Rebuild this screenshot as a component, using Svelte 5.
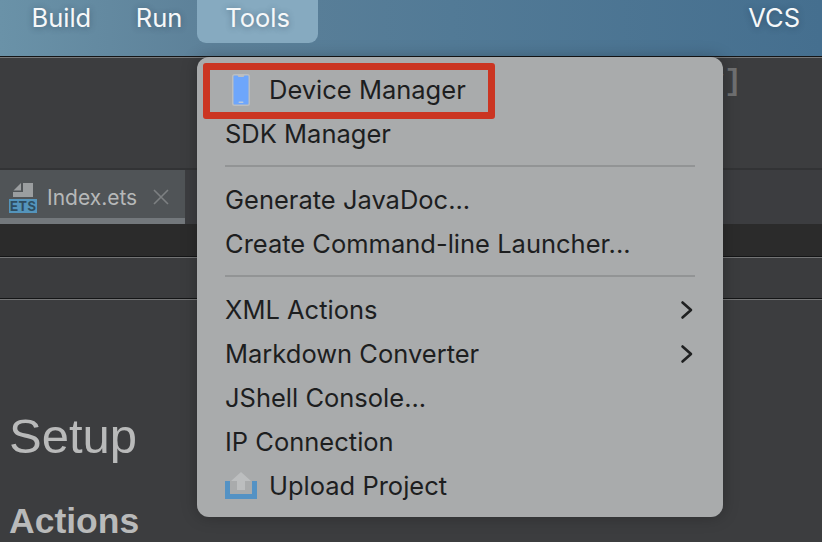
<script lang="ts">
	const menus = [
		{ label: 'Build', active: false },
		{ label: 'Run', active: false },
		{ label: 'Tools', active: true }
	];

	const groups = [
		[
			{ label: 'Device Manager', icon: 'phone' },
			{ label: 'SDK Manager' }
		],
		[
			{ label: 'Generate JavaDoc...' },
			{ label: 'Create Command-line Launcher...' }
		],
		[
			{ label: 'XML Actions', submenu: true },
			{ label: 'Markdown Converter', submenu: true },
			{ label: 'JShell Console...' },
			{ label: 'IP Connection' },
			{ label: 'Upload Project', icon: 'upload' }
		]
	];
</script>

<div class="screen">
	<header class="menubar">
		<nav class="menus">
			{#each menus as menu}
				<span class="menu" class:active={menu.active}>{menu.label}</span>
			{/each}
		</nav>
		<span class="vcs">VCS</span>
	</header>

	<div class="ide">
		<div class="toolbar">
			<span class="run-config">y]</span>
		</div>
		<div class="tabbar">
			<div class="tab">
				<div class="tab-body">
					<svg class="ets-icon" width="30" height="32" viewBox="0 0 30 32">
						<path d="M14 0h10v14H4V9h10z" fill="#9b9ea0" />
						<path d="M12 0v7.500H4.500z" fill="#9b9ea0" />
						<rect x="0" y="16" width="28" height="14" fill="#5494bb" />
						<text x="14" y="28" text-anchor="middle" class="ets-label">ETS</text>
					</svg>
					<span class="tab-name">Index.ets</span>
					<svg class="tab-close" width="16" height="16" viewBox="0 0 16 16">
						<path d="M1 1l14 14M15 1L1 15" stroke="#7d8082" stroke-width="1.600" fill="none" />
					</svg>
				</div>
				<div class="tab-underline"></div>
			</div>
		</div>
		<div class="strip"></div>
		<div class="band"></div>
		<div class="content">
			<h1>Setup</h1>
			<h2>Actions</h2>
		</div>
	</div>

	<div class="dropdown">
		{#each groups as group, i}
			{#if i > 0}
				<div class="separator"></div>
			{/if}
			{#each group as item}
				<div class="item">
					{#if item.icon === 'phone'}
						<svg class="item-icon" width="32" height="34" viewBox="0 0 32 34">
							<rect x="7" y="1" width="18" height="32" rx="2.500" fill="#bcbebf" />
							<path d="M9.500 2.500h3l1 1.500h5l1-1.500h3a1 1 0 0 1 1 1v27a1 1 0 0 1-1 1H9.500a1 1 0 0 1-1-1v-27a1 1 0 0 1 1-1z" fill="#6ea6fb" />
							<rect x="13.500" y="28.500" width="5" height="1.500" rx="0.700" fill="#b9c9de" />
						</svg>
					{:else if item.icon === 'upload'}
						<svg class="item-icon" width="32" height="28" viewBox="0 0 32 28">
							<path d="M2.500 9v15.500h27V9" fill="none" stroke="#5492c4" stroke-width="5" />
							<path d="M16 0l10 9h-6v9h-8V9H6z" fill="#bcbebf" />
						</svg>
					{/if}
					<span class="item-label">{item.label}</span>
					{#if item.submenu}
						<svg class="chevron" width="14" height="20" viewBox="0 0 14 20">
							<path d="M2.500 2.500L11 10L2.500 17.500" fill="none" stroke="#1f2021" stroke-width="2.600" stroke-linecap="round" stroke-linejoin="round" />
						</svg>
					{/if}
				</div>
			{/each}
		{/each}
	</div>

	<div class="highlight"></div>
</div>

<style>
	:global(body) {
		margin: 0;
		background: #3c3d3f;
	}

	.screen {
		position: relative;
		display: flex;
		flex-direction: column;
		width: 822px;
		height: 542px;
		overflow: hidden;
		font-family: Inter, 'Noto Sans', sans-serif;
		background: #3c3d3f;
	}

	.menubar {
		display: flex;
		justify-content: space-between;
		flex: none;
		height: 56px;
		padding: 0 22px 0 3px;
		box-sizing: border-box;
		background: linear-gradient(90deg, #6a92a8 0%, #5d8199 25%, #527a96 55%, #456f8f 100%);
	}

	.menus {
		display: flex;
		height: 43px;
	}

	.menu {
		padding: 0 28.500px;
		color: #f6f8f9;
		font-size: 25.500px;
		line-height: 36px;
		text-shadow: 0 1px 6px rgba(30, 50, 70, 0.45);
	}

	.menu:nth-child(2) {
		padding: 0 14.500px 0 16px;
	}

	.menu.active {
		border-radius: 0 0 9px 9px;
		background: #86aac0;
	}

	.vcs {
		color: #f6f8f9;
		font-size: 25.500px;
		line-height: 36px;
		text-shadow: 0 1px 6px rgba(30, 50, 70, 0.45);
	}

	.ide {
		display: flex;
		flex: 1;
		flex-direction: column;
		border-top: 1px solid #141516;
		box-shadow: inset 0 1px 0 #78797a;
	}

	.toolbar {
		flex: none;
		display: flex;
		justify-content: flex-end;
		height: 113px;
		padding-right: 80px;
		box-sizing: border-box;
		border-bottom: 2px solid #323335;
	}

	.run-config {
		margin-top: 8px;
		color: #6f7071;
		font-family: 'Liberation Mono', monospace;
		font-size: 30px;
		font-weight: 700;
		line-height: 34px;
	}

	.tabbar {
		flex: none;
		display: flex;
		height: 54px;
		background: #3c3d40;
	}

	.tab {
		display: flex;
		flex-direction: column;
		width: 185px;
		height: 54px;
	}

	.tab-body {
		display: flex;
		align-items: center;
		flex: 1;
		padding: 6px 0 0 9px;
		background: #505457;
	}

	.ets-icon {
		flex: none;
		margin-top: 3px;
	}

	.ets-label {
		fill: #2e4d60;
		font-family: 'Liberation Mono', monospace;
		font-size: 14px;
		font-weight: 700;
		letter-spacing: 0.5px;
	}

	.tab-name {
		margin-left: 8px;
		color: #b6b8b9;
		font-size: 21px;
	}

	.tab-close {
		margin-left: 16px;
	}

	.tab-underline {
		height: 6px;
		background: #73787c;
	}

	.strip {
		flex: none;
		height: 33px;
		background: #2b2b2b;
		border-bottom: 1px solid #141516;
		box-sizing: border-box;
	}

	.band {
		flex: none;
		height: 42px;
		box-sizing: border-box;
		border-top: 1px solid #737475;
		border-bottom: 1px solid #141516;
		background: #3b3c3e;
	}

	.content {
		flex: 1;
		padding: 0 0 0 10px;
		border-top: 1px solid #737475;
	}

	h1 {
		margin: 108px 0 0 -1px;
		color: #b9baba;
		font-family: 'Liberation Sans', sans-serif;
		font-size: 49px;
		font-weight: 400;
		line-height: 56px;
	}

	h2 {
		margin: 37px 0 0 -1px;
		color: #b9baba;
		font-family: 'Liberation Sans', sans-serif;
		font-size: 35.500px;
		font-weight: 700;
		line-height: 40px;
	}

	.dropdown {
		position: absolute;
		top: 57px;
		left: 197px;
		display: flex;
		flex-direction: column;
		width: 526px;
		height: 460px;
		padding: 11px 28px 0;
		box-sizing: border-box;
		border-radius: 12px;
		background: #a9abac;
		box-shadow: 0 0 16px rgba(0, 0, 0, 0.25);
	}

	.item {
		display: flex;
		align-items: center;
		flex: none;
		height: 44px;
		padding-bottom: 2px;
		box-sizing: border-box;
		color: #1d1e1f;
		font-size: 25.500px;
	}

	.item-icon {
		flex: none;
		margin: 2px 12px 0 0;
	}

	.chevron {
		margin: 2px 1px 0 auto;
	}

	.separator {
		flex: none;
		height: 2px;
		margin: 9px 0 11px;
		background: #929495;
	}

	.highlight {
		position: absolute;
		top: 63px;
		left: 203px;
		width: 292px;
		height: 56px;
		box-sizing: border-box;
		border: 7px solid #cb3522;
		border-radius: 3px;
	}
</style>
